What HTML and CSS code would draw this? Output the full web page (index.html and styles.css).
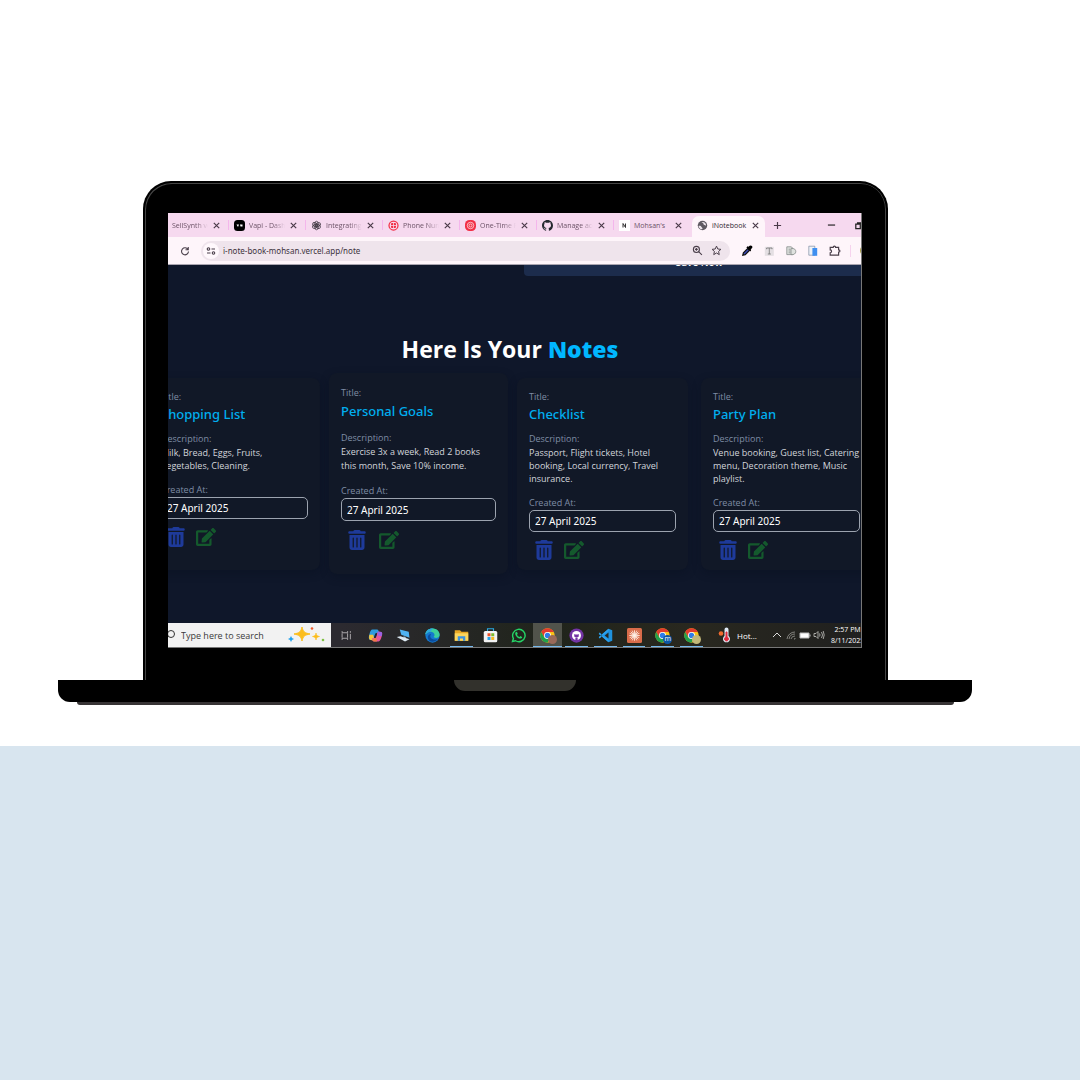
FILE: index.html
```html
<!DOCTYPE html>
<html lang="en">
<head>
<meta charset="utf-8">
<meta name="viewport" content="width=device-width, initial-scale=1">
<title>iNotebook</title>
<link rel="stylesheet" href="styles.css">
</head>
<body>
<svg class="defs" aria-hidden="true">
  <symbol id="close" viewBox="0 0 10 10"><path d="M2 2l6 6M8 2L2 8" stroke="#4a3a48" stroke-width="1.300" fill="none"/></symbol>
  <symbol id="trash" viewBox="0 0 448 512"><path fill="#1e3a9a" d="M135 18c6-11 17-18 29-18h120c12 0 23 7 29 18l7 14h96c18 0 32 14 32 32s-14 32-32 32H32C14 96 0 82 0 64s14-32 32-32h96zM32 128h384v320c0 35-29 64-64 64H96c-35 0-64-29-64-64zm96 64c-9 0-16 7-16 16v224c0 9 7 16 16 16s16-7 16-16V208c0-9-7-16-16-16zm96 0c-9 0-16 7-16 16v224c0 9 7 16 16 16s16-7 16-16V208c0-9-7-16-16-16zm96 0c-9 0-16 7-16 16v224c0 9 7 16 16 16s16-7 16-16V208c0-9-7-16-16-16z"/></symbol>
  <symbol id="edit" viewBox="0 0 576 512"><path fill="#14592d" d="M402.600 83.200l90.200 90.200c3.800 3.800 3.800 10 0 13.800L274.400 405.600l-92.800 10.300c-12.400 1.400-22.900-9.100-21.500-21.500l10.300-92.800L388.800 83.200c3.800-3.800 10-3.800 13.800 0zm162-22.900l-48.800-48.800c-15.200-15.200-39.900-15.200-55.200 0l-35.400 35.400c-3.800 3.800-3.800 10 0 13.800l90.200 90.200c3.800 3.800 10 3.800 13.800 0l35.400-35.400c15.200-15.300 15.200-40 0-55.200zM384 346.200V448H64V128h229.800c3.200 0 6.200-1.300 8.500-3.500l40-40c7.600-7.600 2.200-20.500-8.500-20.500H48C21.500 64 0 85.500 0 112v352c0 26.500 21.500 48 48 48h352c26.500 0 48-21.500 48-48V306.200c0-10.700-12.900-16-20.500-8.500l-40 40c-2.200 2.300-3.500 5.300-3.500 8.500z"/></symbol>
  <symbol id="octocat" viewBox="0 0 16 16"><path d="M8 0C3.580 0 0 3.580 0 8c0 3.540 2.290 6.530 5.470 7.590.4.070.55-.17.55-.38 0-.19-.01-.82-.01-1.490-2.010.37-2.530-.49-2.690-.94-.09-.23-.48-.94-.82-1.130-.28-.15-.68-.52-.01-.53.63-.01 1.080.58 1.230.82.72 1.210 1.870.87 2.330.66.07-.52.28-.87.51-1.070-1.780-.2-3.640-.89-3.640-3.950 0-.87.31-1.590.82-2.150-.08-.2-.36-1.020.08-2.120 0 0 .67-.21 2.200.82.64-.18 1.320-.27 2-.27s1.360.09 2 .27c1.530-1.040 2.200-.82 2.200-.82.44 1.100.16 1.920.08 2.120.51.56.82 1.270.82 2.150 0 3.070-1.870 3.750-3.650 3.950.29.25.54.73.54 1.480 0 1.070-.01 1.930-.01 2.200 0 .21.15.46.55.38A8 8 0 0 0 16 8c0-4.420-3.580-8-8-8z"/></symbol>
  <symbol id="chrome" viewBox="0 0 48 48"><circle cx="24" cy="24" r="23" fill="#fbc116"/><path fill="#e33b2e" d="M4 12.500A23 23 0 0 1 44 12.500H24L14 30z"/><path fill="#22a04b" d="M4 12.500A23 23 0 0 0 24 47l10-17-20 0z"/><circle cx="24" cy="24" r="11" fill="#fff"/><circle cx="24" cy="24" r="8.500" fill="#2f7de8"/></symbol>
</svg>

<main class="stage">
  <div class="laptop">
    <div class="lid">
      <div class="screen">
        <nav class="tabs" aria-label="Browser tabs">
          <div class="tab"><span class="favicon"></span><span class="tab-name">SellSynth voi</span><button class="close" aria-label="Close tab"><svg><use href="#close"/></svg></button></div>
          <div class="tab"><span class="favicon"><svg viewBox="0 0 22 22"><rect width="22" height="22" rx="7"/><path d="M5 9h5l-2 5zM12 9h5v4h-4z" fill="#fff"/></svg></span><span class="tab-name">Vapi - Dashb</span><button class="close" aria-label="Close tab"><svg><use href="#close"/></svg></button></div>
          <div class="tab"><span class="favicon"><svg viewBox="0 0 22 22" fill="none" stroke="#4a414c" stroke-width="1.800"><ellipse cx="11" cy="7.500" rx="3.500" ry="5"/><ellipse cx="11" cy="7.500" rx="3.500" ry="5" transform="rotate(60 11 11)"/><ellipse cx="11" cy="7.500" rx="3.500" ry="5" transform="rotate(120 11 11)"/><ellipse cx="11" cy="7.500" rx="3.500" ry="5" transform="rotate(180 11 11)"/><ellipse cx="11" cy="7.500" rx="3.500" ry="5" transform="rotate(240 11 11)"/><ellipse cx="11" cy="7.500" rx="3.500" ry="5" transform="rotate(300 11 11)"/></svg></span><span class="tab-name">Integrating A</span><button class="close" aria-label="Close tab"><svg><use href="#close"/></svg></button></div>
          <div class="tab"><span class="favicon"><svg viewBox="0 0 22 22"><circle cx="11" cy="11" r="9" fill="none" stroke="#f22f46" stroke-width="2.500"/><rect x="6" y="6" width="10" height="10" rx="2" fill="#f22f46"/><path d="M11 6v10M6 11h10" stroke="#f8dcf0" stroke-width="1.500"/></svg></span><span class="tab-name">Phone Numb</span><button class="close" aria-label="Close tab"><svg><use href="#close"/></svg></button></div>
          <div class="tab"><span class="favicon"><svg viewBox="0 0 22 22"><rect width="22" height="22" rx="9" fill="#f22f46"/><circle cx="11" cy="11" r="6.500" fill="none" stroke="#fff" stroke-width="1.300"/><circle cx="11" cy="11" r="3" fill="none" stroke="#fff" stroke-width="1.300"/></svg></span><span class="tab-name">One-Time P</span><button class="close" aria-label="Close tab"><svg><use href="#close"/></svg></button></div>
          <div class="tab"><span class="favicon"><svg fill="#24292f"><use href="#octocat"/></svg></span><span class="tab-name">Manage acc</span><button class="close" aria-label="Close tab"><svg><use href="#close"/></svg></button></div>
          <div class="tab"><span class="favicon"><svg viewBox="0 0 22 22"><rect width="22" height="22" fill="#fff"/><path d="M8 7v8M8 7l5 8M13 7v8" stroke="#333" stroke-width="2" fill="none"/></svg></span><span class="tab-name whole">Mohsan's</span><button class="close" aria-label="Close tab"><svg><use href="#close"/></svg></button></div>
          <div class="tab active"><span class="favicon"><svg viewBox="0 0 22 22"><circle cx="11" cy="11" r="9.500" fill="#5f5a62"/><path d="M3 12c3-1 5 0 6 2s2 1 2 4c-4 1-7-1-8-6zM9 4c1 2 4 1 4 4s4 1 5 4c1-5-3-9-9-8z" fill="#efe7ee"/></svg></span><span class="tab-name whole">iNotebook</span><button class="close" aria-label="Close tab"><svg><use href="#close"/></svg></button></div>
          <button class="new-tab" aria-label="New tab"><svg viewBox="0 0 10 10"><path d="M5 1v8M1 5h8" stroke="#4a3a48" stroke-width="1.300"/></svg></button>
          <div class="window-controls">
            <button aria-label="Minimize"><svg viewBox="0 0 10 10"><path d="M1 4.500h8" stroke="#222" stroke-width="1.300"/></svg></button>
            <button aria-label="Restore"><svg viewBox="0 0 10 10"><path d="M2 3.500h5v5H2zM4 3V2h5v5H8" stroke="#222" stroke-width="1.400" fill="none"/></svg></button>
          </div>
        </nav>

        <div class="toolbar">
          <button class="reload" aria-label="Reload"><svg viewBox="0 0 20 20" fill="none" stroke="#4a3f4a" stroke-width="2.200"><path d="M16 7a7 7 0 1 0 1 4M16.500 2v5.500H11"/></svg></button>
          <div class="address">
            <span class="site-info"><svg viewBox="0 0 20 20" fill="none" stroke="#4a3f4a" stroke-width="2.200"><circle cx="5" cy="6" r="2.500"/><path d="M11 6h7M2 14h7"/><circle cx="15" cy="14" r="2.500"/></svg></span>
            <input class="url" type="text" aria-label="Address" value="i-note-book-mohsan.vercel.app/note">
            <button aria-label="Zoom"><svg viewBox="0 0 20 20" fill="none" stroke="#4a3f4a" stroke-width="2"><circle cx="8" cy="8" r="5.500"/><path d="M12 12l6 6M5.500 8h5M8 5.500v5"/></svg></button>
            <button aria-label="Bookmark"><svg viewBox="0 0 20 20" fill="none" stroke="#4a3f4a" stroke-width="1.800"><path d="M10 2l2.400 5.300 5.600.6-4.200 3.800 1.200 5.800-5-3-5 3 1.200-5.800L2 7.900l5.600-.6z"/></svg></button>
          </div>
          <div class="extensions">
            <button aria-label="Color picker"><svg viewBox="0 0 20 20"><path d="M3 17l1-4 7-7 3 3-7 7z" fill="#3a49b8" stroke="#111" stroke-width="2"/><path d="M9 4l7 7 1-3-1-1c4-1 4-6 0-6-2 0-3 2-3 2l-2-1z"/></svg></button>
            <button aria-label="Text tool"><svg viewBox="0 0 20 20"><rect x="3" y="3" width="15" height="15" fill="#e4dfe3"/><path d="M6 7V5h9v2M10.500 5v10M8 15h5" fill="none" stroke="#777" stroke-width="1.400"/></svg></button>
            <button aria-label="Reader"><svg viewBox="0 0 20 20" fill="#dfe2df" stroke="#848a88" stroke-width="1.300"><path d="M3 3h7l3 2v11H3z"/><path d="M10 6c6-1 8 2 8 5s-3 6-8 5z"/><path d="M6 7h3M6 10h3M6 13h3"/></svg></button>
            <button aria-label="Side panel"><svg viewBox="0 0 20 20"><path d="M3 2h10v15H3z" fill="#eef2f8" stroke="#687b92"/><path d="M9 5h8v13H9z" fill="#3f8ff0"/></svg></button>
            <button aria-label="Extensions"><svg viewBox="0 0 20 20" fill="none" stroke="#4a3f4a" stroke-width="2"><path d="M2 4h5c0-3 4-3 4 0h5v4c3 0 3 4 0 4v5H2v-4c3 0 3-5 0-5z"/></svg></button>
          </div>
          <span class="profile"></span>
        </div>

        <section class="page">
          <button class="save">Save Now</button>
          <h1>Here Is Your <span>Notes</span></h1>
          <div class="cards">
            <article class="card">
              <p class="label">Title:</p><h2>Shopping List</h2>
              <p class="label">Description:</p><p class="text">Milk, Bread, Eggs, Fruits,<br>Vegetables, Cleaning.</p>
              <label class="label" for="d1">Created At:</label><input id="d1" type="text" value="27 April 2025">
              <div class="actions"><button aria-label="Delete"><svg><use href="#trash"/></svg></button><button aria-label="Edit"><svg><use href="#edit"/></svg></button></div>
            </article>
            <article class="card raised">
              <p class="label">Title:</p><h2>Personal Goals</h2>
              <p class="label">Description:</p><p class="text">Exercise 3x a week, Read 2 books<br>this month, Save 10% income.</p>
              <label class="label" for="d2">Created At:</label><input id="d2" type="text" value="27 April 2025">
              <div class="actions"><button aria-label="Delete"><svg><use href="#trash"/></svg></button><button aria-label="Edit"><svg><use href="#edit"/></svg></button></div>
            </article>
            <article class="card">
              <p class="label">Title:</p><h2>Checklist</h2>
              <p class="label">Description:</p><p class="text">Passport, Flight tickets, Hotel<br>booking, Local currency, Travel<br>insurance.</p>
              <label class="label" for="d3">Created At:</label><input id="d3" type="text" value="27 April 2025">
              <div class="actions"><button aria-label="Delete"><svg><use href="#trash"/></svg></button><button aria-label="Edit"><svg><use href="#edit"/></svg></button></div>
            </article>
            <article class="card">
              <p class="label">Title:</p><h2>Party Plan</h2>
              <p class="label">Description:</p><p class="text">Venue booking, Guest list, Catering<br>menu, Decoration theme, Music<br>playlist.</p>
              <label class="label" for="d4">Created At:</label><input id="d4" type="text" value="27 April 2025">
              <div class="actions"><button aria-label="Delete"><svg><use href="#trash"/></svg></button><button aria-label="Edit"><svg><use href="#edit"/></svg></button></div>
            </article>
          </div>
        </section>

        <footer class="taskbar">
          <div class="search">
            <svg class="lens" viewBox="0 0 12 12" fill="none" stroke="#333"><circle cx="8" cy="5" r="3.500"/><path d="M5.500 7.500L2 11"/></svg>
            <input type="text" aria-label="Search" placeholder="Type here to search">
            <svg class="spark" viewBox="0 0 38 18"><path d="M14 1c1 5 3 6 8 7-5 1-7 2-8 7-1-5-3-6-8-7 5-1 7-2 8-7z" fill="#fcbd1c" stroke="#fcbd1c"/><path d="M28 7c.5 2.500 1 3 3.500 3.500-2.500.5-3 1-3.500 3.500-.5-2.500-1-3-3.500-3.500 2.500-.5 3-1 3.500-3.500z" fill="#fcbd1c" stroke="#fcbd1c" stroke-width=".6"/><path d="M3 10l1 2 2 1-2 1-1 2-1-2-2-1 2-1z" fill="#1fa0ec"/><circle cx="24" cy="2.500" r="1.300" fill="#ee5a2c"/><circle cx="35" cy="14" r="1.300" fill="#7fc143"/></svg>
          </div>
          <div class="apps">
            <button aria-label="Task view"><svg viewBox="0 0 20 20" fill="none" stroke="#b9b6ba" stroke-width="1.600"><path d="M2 2v3h10V2M2 18v-3h10v3M2 6v8M12 6v8M17 7v10M17 2v3"/></svg></button>
            <button aria-label="Copilot"><svg viewBox="0 0 20 20"><path d="M6 2h6c2 0 2 2 3 4l-5 1-3 9H4c-4 0-3-5-2-8 1-4 2-6 4-6z" fill="#2d9be0"/><path d="M2 9l5 0 1 5c0 3-2 3-4 2-3 0-3-4-2-7z" fill="#f5c33b"/><path d="M14 18H8c-2 0-2-2-3-4l5-1 3-8h3c4 0 3 4 2 7s-2 6-4 6z" fill="#e4559b"/><path d="M13 5h3c4 0 3 4 2 6l-5-1z" fill="#9a62e4"/><path d="M6 15l5-2 1 5H8c-1 0-2-1-2-3z" fill="#f07b45"/><path d="M9.500 8h2.500l-1.500 5H8z" fill="#1d2440"/></svg></button>
            <button aria-label="Remote desktop"><svg viewBox="0 0 20 20"><path d="M5 2l12 3 1 8-11-4z" fill="#4fb3f2"/><path d="M10 11l3 1v3h-3z" fill="#9bb3c4"/><path d="M1 12l5-1 12 4-6 3z" fill="#dce9f2"/></svg></button>
            <button aria-label="Edge"><svg viewBox="0 0 20 20"><circle cx="10" cy="10" r="9.500" fill="#1578cf"/><path d="M.5 9C1-2 19-2 19.500 9c0 5-7 5-8 3 3-3 0-7-4-7-3 0-6 2-7 4z" fill="#3dcf9c"/><path d="M.5 9C1 3 6 0 11 1c-3 0-2 4-4 4S1 7 .5 9z" fill="#2ea9dd"/><path d="M8 8c-3 4 1 9 9 7-4 5-12 4-13-1-1-3 1-6 4-6z" fill="#0b4c9d"/></svg></button>
            <button class="open" aria-label="File Explorer"><svg viewBox="0 0 20 20"><path d="M1 3h7l2 2h9v12H1z" fill="#e8a825"/><path d="M1 7h18v10H1z" fill="#fcd65d"/><path d="M5 17v-6h10v6h-3v-3H8v3z" fill="#3b93df"/></svg></button>
            <button aria-label="Store"><svg viewBox="0 0 20 20"><path d="M6 5V1h8v4" stroke="#2ba8e0" stroke-width="1.500" fill="none"/><rect x="1" y="4" width="18" height="15" rx="2" fill="#f3f3f3"/><path d="M6 7h4v4H6z" fill="#ef5127"/><path d="M11 7h4v4h-4z" fill="#7ebb2d"/><path d="M6 12h4v4H6z" fill="#24a3e8"/><path d="M11 12h4v4h-4z" fill="#f8b822"/></svg></button>
            <button aria-label="WhatsApp"><svg viewBox="0 0 20 20"><path d="M2 18l1.200-4A8.300 8.300 0 1 1 6 17z" fill="none" stroke="#25d366" stroke-width="1.900"/><path d="M6 6c1-2 2-1 3 1.500L8 9c1 2 2 2.500 3.500 3l1-1.300c3 1.300 3 1.800 1.500 3C10 16 4 9 6 6z" fill="#25d366"/></svg></button>
            <button class="open current" aria-label="Chrome"><svg><use href="#chrome"/></svg><i class="avatar rose"></i></button>
            <button class="open" aria-label="GitHub Desktop"><svg viewBox="0 0 20 20"><circle cx="10" cy="10" r="9.500" fill="#7434a5"/><circle cx="10" cy="10" r="6" fill="#fff"/><path d="M7 8l1.500.5h3L13 8v3c0 2-6 2-6 0zM8.500 13h3v3h-3z" fill="#7434a5"/></svg></button>
            <button class="open" aria-label="VS Code"><svg viewBox="0 0 20 20"><path d="M14 1l5 2v14l-5 2L4 10z" fill="#1f91dc"/><path d="M2 6l12 10v3L1 8zM2 14L14 4V1L1 12z" fill="#2aa2ef"/><path d="M14 6v8l-5-4z" fill="#24261f"/></svg></button>
            <button class="open" aria-label="Claude"><svg viewBox="0 0 20 20"><rect width="20" height="20" rx="2" fill="#d96c4a"/><path d="M10 3v14M3 10h14M5 5l10 10M15 5L5 15M7 3.500l6 13M13 3.500l-6 13M3.500 7l13 6M3.500 13l13-6" stroke="#fff2e8" stroke-width="1.100"/></svg></button>
            <button class="open" aria-label="Chrome, profile m"><svg><use href="#chrome"/></svg><i class="avatar blue">m</i></button>
            <button class="open" aria-label="Chrome, second profile"><svg><use href="#chrome"/></svg><i class="avatar sand"></i></button>
          </div>
          <div class="tray">
            <svg class="weather" viewBox="0 0 12 16"><circle cx="2.500" cy="6.500" r="2.300" fill="#ef6a2e"/><path d="M6 2.500a2 2 0 0 1 4 0V9a3.500 3.500 0 1 1-4 0z" fill="#dfe9f5"/><path d="M7.500 5h1v5a2 2 0 1 1-1 0z" fill="#e02c3f" stroke="#e02c3f"/></svg>
            <span class="hot">Hot...</span>
            <svg viewBox="0 0 12 12" fill="none" stroke="#dcdcda"><path d="M2 8l4-4 4 4"/></svg>
            <svg viewBox="0 0 12 12" fill="none" stroke="#999994" stroke-width=".8"><path d="M2 10A8 8 0 0 1 10 3M4 10a6 6 0 0 1 6-5M6 10a4 4 0 0 1 4-3M9 10h1V9"/></svg>
            <svg viewBox="0 0 12 12"><path d="M1 4h9v5H1z" fill="#fff" stroke="#bbb"/><path d="M11 5.500v2" stroke="#ccc"/></svg>
            <svg viewBox="0 0 12 12" fill="none" stroke="#c4c4c0" stroke-width=".8"><path d="M1 4.500h2L5 2.500v7l-2-2H1zM6.500 4.500q1 1.500 0 3M8.500 3q2 3 0 6M10.200 2q2 4 0 8"/></svg>
            <div class="clock"><span>2:57 PM</span><span>8/11/2025</span></div>
          </div>
        </footer>
      </div>
    </div>
    <div class="base"><div class="notch"></div></div>
    <div class="foot"></div>
  </div>
</main>
</body>
</html>
```
FILE: styles.css
```css
* { box-sizing: border-box; }
body {
  margin: 0;
  min-height: 100vh;
  background: #d8e5ef;
  font-family: "Open Sans", "Noto Sans", sans-serif;
  font-size: 8px;
}
h1, h2, p { margin: 0; }
button, input {
  margin: 0;
  padding: 0;
  border: 0;
  background: none;
  color: inherit;
  font: inherit;
  min-width: 0;
}
button { display: flex; align-items: center; justify-content: center; flex: none; }
svg { display: block; flex: none; }
.defs { display: none; }

/* Laptop */
.stage { background: #fff; padding: 181px 108px 41px 58px; }
.lid {
  margin: 0 84px 0 85px;
  padding: 30px 24px 32px 23px;
  border: 2px solid #000;
  border-bottom: 0;
  border-radius: 28px 28px 0 0;
  background: #000;
  box-shadow: inset 1px 1px #444, inset -1px 0 #444;
}
.screen {
  overflow: hidden;
  border-right: 1px solid #777;
  border-bottom: 1px solid #777;
  background: #0f172a;
}
.base {
  display: flex;
  justify-content: center;
  height: 22px;
  border-radius: 0 0 12px 12px;
  background: #000;
}
.notch { width: 122px; height: 11px; border-radius: 0 0 11px 11px; background: #32312c; }
.foot { height: 3px; margin: 0 18px 0 19px; border-radius: 0 0 4px 4px; background: #373435; }

/* Tab strip */
.tabs {
  display: flex;
  align-items: center;
  height: 24px;
  margin-left: -17px;
  background: #f6d9ef;
  color: #6b5266;
  font-size: 7px;
}
.tab {
  display: flex;
  align-items: center;
  gap: 4px;
  flex: 0 0 77px;
  min-width: 0;
  height: 10px;
  padding: 0 7px 0 5px;
  border-left: 1px solid #f4b6ec;
}
.favicon { width: 11px; height: 11px; flex: none; }
.favicon svg { width: 11px; height: 11px; }
.tab-name {
  flex: 1;
  min-width: 0;
  overflow: hidden;
  white-space: nowrap;
  -webkit-mask-image: linear-gradient(90deg, #000 65%, transparent);
  mask-image: linear-gradient(90deg, #000 65%, transparent);
}
.tab-name.whole { -webkit-mask-image: none; mask-image: none; }
.close, .close svg { width: 9px; height: 9px; }
.tab.active {
  flex-basis: 73px;
  align-self: flex-end;
  height: 21px;
  margin-left: 2px;
  padding: 0 5px 2px 5px;
  border: 0;
  border-radius: 7px 7px 0 0;
  background: #fef5fa;
  color: #2f2530;
}
.new-tab { width: 24px; }
.new-tab svg { width: 9px; }
.window-controls { display: flex; gap: 18px; margin: 0 -2px 0 auto; }
.window-controls svg { width: 9px; }

/* Toolbar */
.toolbar {
  display: flex;
  align-items: center;
  height: 28px;
  padding-left: 11px;
  border-bottom: 1px solid #aaa5b0;
  background: #fef5fa;
  color: #3d333c;
}
.reload { width: 12px; margin-right: 10px; }
.reload svg { width: 10px; }
.address {
  display: flex;
  align-items: center;
  gap: 8px;
  flex: 1;
  height: 20px;
  padding: 0 8px 0 2px;
  border-radius: 10px;
  background: #efe4ec;
}
.address svg { width: 11px; height: 11px; }
.site-info { padding: 3px; border-radius: 50%; background: #fff8fc; }
.address .site-info svg { width: 10px; height: 10px; }
.url { flex: 1; margin-left: -4px; font-family: "Noto Sans", sans-serif; }
.extensions { display: flex; gap: 10px; padding: 0 9px 0 11px; border-right: 1px solid #f6d3ee; }
.extensions svg { width: 12px; height: 12px; }
.profile { width: 11px; height: 11px; margin: 0 -10px 0 9px; border-radius: 50%; background: #a99e45; }

/* Notes page */
.page {
  display: flex;
  flex-direction: column;
  overflow: hidden;
  padding-bottom: 53px;
  color: #fff;
}
.save {
  align-self: flex-end;
  width: 51%;
  height: 28px;
  margin: -17px -16px 0 0;
  border-radius: 4px;
  background: #1c2c4c;
  font-size: 10px;
  font-weight: 600;
}
.page .save { width: 51%; padding-right: 2px; }
h1 {
  margin: 58px 9px 13px 0;
  text-align: center;
  font-size: 23px;
  font-weight: 700;
  line-height: 31px;
}
h1 span { color: #00b7ff; font-weight: 800; }
.cards {
  display: grid;
  grid-template-columns: repeat(4, 1fr);
  gap: 13px;
  margin: 0 -11px 0 -19px;
}
.card {
  padding: 12px 12px 10px;
  border-radius: 8px;
  background: #111827;
  box-shadow: 0 3px 8px rgba(8, 14, 30, .4);
}
.label { display: block; color: #7f8da5; font-size: 9px; line-height: 14px; }
.card h2 {
  margin-bottom: 8px;
  color: #00aeef;
  font-family: "Noto Sans", sans-serif;
  font-size: 13px;
  font-weight: 500;
  line-height: 20px;
}
.text {
  margin-bottom: 11px;
  color: #d1d5db;
  font-size: 9px;
  line-height: 13px;
  white-space: nowrap;
}
.card input {
  display: block;
  width: 100%;
  height: 22px;
  padding: 0 5px;
  border: 1px solid #9ca3af;
  border-radius: 5px;
  font-family: "Noto Sans", sans-serif;
  font-size: 10px;
}
.actions { display: flex; gap: 10px; margin: 8px 5px 0; }
.actions svg { width: 20px; height: 20px; }
.raised { margin: -5px -4px -4px; padding: 13px 12px; }
.raised h2 { margin-bottom: 9px; line-height: 22px; }
.raised .text { line-height: 14px; }
.raised input { height: 23px; }
.raised .actions { gap: 12px; margin: 9px 6px 0; }

/* Taskbar */
.taskbar {
  display: flex;
  height: 24px;
  background: linear-gradient(90deg, #2c2a30 25%, #20241b 55%, #29281f 75%, #20201f);
  color: #fff;
}
.search {
  display: flex;
  align-items: center;
  flex: 0 0 163px;
  min-width: 0;
  padding-right: 5px;
  background: #f2f2f2;
  color: #3a3a3a;
}
.search input { flex: 1; padding-left: 6px; font-size: 9px; }
.search input::placeholder { color: #3a3a3a; }
.lens { width: 12px; height: 12px; margin-left: -5px; }
.spark { width: 38px; height: 18px; }
.apps { display: flex; flex: 1; padding-left: 1px; }
.apps button { position: relative; flex: 1; }
.apps svg { width: 15px; height: 15px; }
.apps button:first-child svg { width: 11px; height: 11px; }
.apps .open::after {
  content: "";
  position: absolute;
  right: 3px;
  bottom: 0;
  left: 3px;
  height: 1px;
  background: #76b9ed;
}
.apps .current { background: #51534b; }
.apps .current::after { right: 0; left: 0; }
.avatar {
  position: absolute;
  right: 5px;
  bottom: 3px;
  width: 9px;
  height: 9px;
  border-radius: 50%;
  font-size: 7px;
  font-style: normal;
  line-height: 8px;
}
.rose { background: #9a6a5a; }
.blue { background: #0d57a5; }
.sand { background: #c3b878; }
.tray { display: flex; align-items: center; gap: 2px; flex: 0 0 155px; min-width: 0; padding-left: 12px; }
.tray svg { width: 12px; height: 12px; }
.tray .weather { width: 13px; height: 16px; }
.hot { flex: 0 0 32px; margin-left: 4px; }
.clock {
  display: flex;
  flex-direction: column;
  align-items: center;
  margin-left: 4px;
  font-size: 7px;
  line-height: 11px;
  white-space: nowrap;
}
```
